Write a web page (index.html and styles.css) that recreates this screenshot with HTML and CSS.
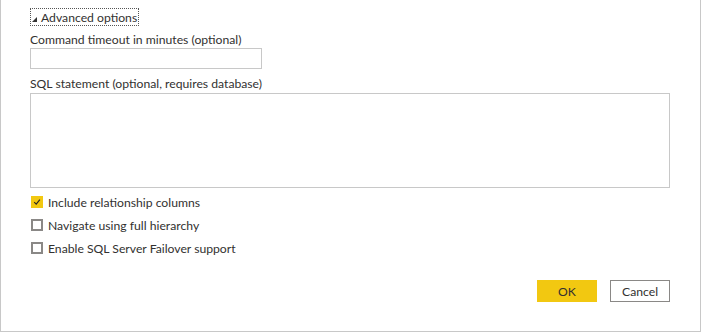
FILE: index.html
```html
<!DOCTYPE html>
<html>
<head>
<meta charset="utf-8">
<link rel="stylesheet" href="styles.css">
</head>
<body>
<div class="dialog">
  <div class="content">
    <div class="toggle"><span class="tri"></span><span class="toggle-text">Advanced options</span></div>
    <label class="label">Command timeout in minutes (optional)</label>
    <div class="input"></div>
    <label class="label sql">SQL statement (optional, requires database)</label>
    <div class="textarea"></div>
    <div class="checks">
      <div class="check"><span class="box checked"><svg width="10" height="10" viewBox="0 0 10 10"><path d="M1.5 5.2 L4 7.6 L8.6 2" fill="none" stroke="#252423" stroke-width="1.4"/></svg></span><span>Include relationship columns</span></div>
      <div class="check"><span class="box"></span><span>Navigate using full hierarchy</span></div>
      <div class="check"><span class="box"></span><span>Enable SQL Server Failover support</span></div>
    </div>
    <div class="buttons">
      <button class="btn ok">OK</button>
      <button class="btn cancel">Cancel</button>
    </div>
  </div>
</div>
</body>
</html>
```
FILE: styles.css
```css
html, body { margin: 0; padding: 0; background: #fff; }
body { font-family: Lato, "Open Sans", sans-serif; font-size: 12.2px; color: #323130; }
.dialog {
  width: 699px; height: 331px;
  border-left: 1px solid #c8c8c8; border-right: 1px solid #c8c8c8; border-bottom: 1px solid #c8c8c8;
}
.content { padding: 8px 0 0 29px; display: flex; flex-direction: column; align-items: flex-start; }
.toggle {
  display: flex; align-items: center; height: 18px; box-sizing: border-box;
  border: 1px dotted #555; padding: 0 1px 0 0; white-space: nowrap;
}
.tri { width: 0; height: 0; border-left: 5px solid transparent; border-bottom: 5px solid #333; margin: 4px 4px 0 1px; }
.label { display: block; margin-top: 6px; line-height: 16px; white-space: nowrap; }
.input { width: 232px; height: 21px; box-sizing: border-box; border: 1px solid #c8c8c8; }
.label.sql { margin-top: 7px; }
.textarea { margin-top: 1px; width: 640px; height: 95px; box-sizing: border-box; border: 1px solid #c8c8c8; }
.checks { margin-top: 6px; display: flex; flex-direction: column; gap: 7px; }
.check { display: flex; align-items: center; height: 16px; white-space: nowrap; }
.box {
  width: 12px; height: 12px; box-sizing: border-box; border: 2px solid #8a8886; margin: 0 5px 0 1px;
  display: flex; align-items: center; justify-content: center;
}
.box.checked { background: #f2c811; border-color: #f2c811; }
.buttons { align-self: flex-end; margin-top: 24px; margin-right: 30px; display: flex; gap: 13px; }
.btn { width: 60px; height: 22px; font-family: inherit; font-size: 12.2px; color: #323130; padding: 0; box-sizing: border-box; }
.ok { background: #f2c811; border: none; }
.cancel { background: #fff; border: 1px solid #8a8886; }
```
